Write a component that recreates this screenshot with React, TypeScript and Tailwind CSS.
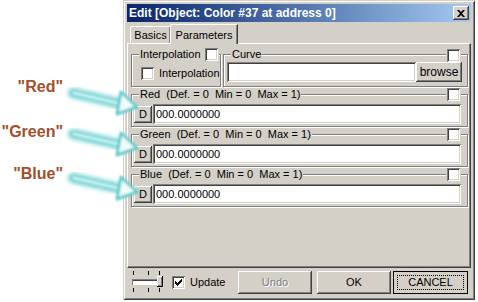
import React from 'react'

// ── Classic 3D bevels ──
const raised =
  'bg-[#d4d0c8] shadow-[inset_-1px_-1px_#404040,inset_1px_1px_#ffffff,inset_-2px_-2px_#808080,inset_2px_2px_#d4d0c8]'
const sunken =
  'bg-white shadow-[inset_1px_1px_#808080,inset_-1px_-1px_#ffffff,inset_2px_2px_#404040,inset_-2px_-2px_#d4d0c8]'
const etched = 'relative border border-[#808080] shadow-[inset_1px_1px_#ffffff,1px_1px_#ffffff]'

function CheckBox({ checked = false }: { checked?: boolean }) {
  return (
    <span className={`flex h-[13px] w-[13px] shrink-0 items-center justify-center ${sunken}`}>
      {checked && (
        <svg width="7" height="7" viewBox="0 0 7 7">
          <path d="M0 2h1v1h1v1h1V3h1V2h1V1h1V0h1v3H6v1H5v1H4v1H3v1H2V6H1V5H0z" fill="#000" />
        </svg>
      )}
    </span>
  )
}

function ParamGroup({ name }: { name: string }) {
  return (
    <div className={`${etched} mt-[7px] h-[33px]`}>
      <span className="absolute -top-[7px] left-[7px] whitespace-pre bg-[#d4d0c8] px-[1px] leading-[13px]">
        {`${name}  (Def. = 0  Min = 0  Max = 1)`}
      </span>
      <span className="absolute -top-[7px] right-[6px] bg-[#d4d0c8] px-[1px]">
        <CheckBox />
      </span>
      <div className="mt-[9px] flex items-center gap-[1px] pl-[2px] pr-[6px]">
        <button className={`flex h-[17px] w-[18px] items-center justify-center ${raised}`}>D</button>
        <div className={`flex h-[20px] flex-1 items-center pl-[3px] ${sunken}`}>000.0000000</div>
      </div>
    </div>
  )
}

function Arrow({ dy }: { dy: number }) {
  return (
    <g transform={`translate(0 ${dy})`}>
      <line x1="73" y1="93" x2="120" y2="103.5" stroke="#74d4d4" strokeWidth="10" strokeLinecap="round" filter="url(#glow)" />
      <line x1="74" y1="93" x2="120" y2="103.5" stroke="#cdf2f2" strokeWidth="3" strokeLinecap="round" filter="url(#soft)" />
      <polygon points="121,92 117,114 137,107" fill="#f2fbfb" stroke="#62cccc" strokeWidth="3" strokeLinejoin="round" filter="url(#soft)" />
    </g>
  )
}

export default function App() {
  return (
    <div className="relative h-[302px] w-[478px] overflow-hidden bg-white font-['Liberation_Sans',Arial,sans-serif] text-[11px] text-black">
      {/* ── Annotations ── */}
      {[
        { t: '"Red"', top: 'top-[79px]' },
        { t: '"Green"', top: 'top-[124px]' },
        { t: '"Blue"', top: 'top-[166px]' },
      ].map((l) => (
        <span
          key={l.t}
          className={`absolute right-[415px] ${l.top} text-[16px] leading-[16px] font-bold text-[#a44e2c]`}
        >
          {l.t}
        </span>
      ))}

      {/* ── Dialog window ── */}
      <div className="ml-[123px] flex h-[300px] w-[352px] flex-col bg-[#d4d0c8] p-[4px] shadow-[inset_1px_1px_#d4d0c8,inset_-1px_-1px_#404040,inset_2px_2px_#ffffff,inset_-2px_-2px_#808080]">
        {/* Title bar */}
        <div className="flex h-[18px] shrink-0 items-center bg-gradient-to-r from-[#0a246a] to-[#a6caf0] pl-[2px] pr-[2px]">
          <span className="flex-1 text-[12px] font-bold text-white">Edit [Object: Color #37 at address 0]</span>
          <button className={`flex h-[14px] w-[16px] items-center justify-center ${raised}`}>
            <svg width="8" height="7" viewBox="0 0 8 7">
              <path d="M0 0h2l2 2 2-2h2L5 3.5 8 7H6L4 5 2 7H0l3-3.5z" fill="#000" />
            </svg>
          </button>
        </div>

        {/* Tabs */}
        <div className="flex h-[21px] shrink-0 items-end pl-[3px]">
          <div className="flex h-[17px] w-[40px] items-center justify-center border-t border-l border-t-white border-l-white shadow-[inset_-1px_0_#808080] rounded-tl-[2px]">
            Basics
          </div>
          <div className="relative z-10 -mb-[1px] flex h-[20px] w-[68px] items-start justify-center border-t border-l border-r border-t-white border-l-white border-r-[#404040] bg-[#d4d0c8] pt-[2px] shadow-[inset_-1px_0_#808080] rounded-tl-[2px]">
            Parameters
          </div>
        </div>

        {/* Panel */}
        <div className="flex h-[225px] shrink-0 flex-col border border-t-white border-l-white border-r-[#404040] border-b-[#404040] pl-[3px] pr-[2px] shadow-[inset_-1px_-1px_#808080]">
          <div className="mt-[10px] flex gap-[2px]">
            {/* Interpolation */}
            <div className={`${etched} h-[33px] w-[90px]`}>
              <span className="absolute -top-[7px] left-[7px] flex items-center gap-[4px] bg-[#d4d0c8] px-[1px] leading-[13px]">
                Interpolation
                <CheckBox />
              </span>
              <div className="mt-[10px] ml-[9px] flex items-center gap-[5px]">
                <CheckBox />
                <span>Interpolation</span>
              </div>
            </div>
            {/* Curve */}
            <div className={`${etched} h-[33px] flex-1`}>
              <span className="absolute -top-[7px] left-[7px] bg-[#d4d0c8] px-[1px] leading-[13px]">Curve</span>
              <span className="absolute -top-[6px] right-[6px] bg-[#d4d0c8] px-[1px]">
                <CheckBox />
              </span>
              <div className="mt-[7px] flex pl-[3px] pr-[5px]">
                <div className={`h-[20px] flex-1 ${sunken}`} />
                <button className={`h-[20px] w-[46px] pb-[1px] text-[12px] ${raised}`}>browse</button>
              </div>
            </div>
          </div>

          <ParamGroup name="Red" />
          <ParamGroup name="Green" />
          <ParamGroup name="Blue" />
        </div>

        {/* Bottom bar */}
        <div className="flex flex-1 items-center pl-[5px] pr-[3px]">
          <svg width="31" height="22" viewBox="0 0 31 22" className="shrink-0">
            <g stroke="#000" strokeWidth="1">
              <path d="M1.5 0v4M16.5 0v4M27.5 0v4M1.5 17v4M16.5 17v4M27.5 17v4" />
            </g>
            <rect x="0" y="8" width="26" height="6" fill="#fff" />
            <path d="M0 8.5h26M0.5 8v6" stroke="#808080" />
            <path d="M1 9.5h25" stroke="#404040" />
            <rect x="25" y="5" width="5" height="11" fill="#d4d0c8" />
            <path d="M25.5 16V5.5H30" stroke="#fff" fill="none" />
            <path d="M25 15.5h5.5V5" stroke="#000" fill="none" />
            <path d="M26 14.5h3.5V6" stroke="#808080" fill="none" />
          </svg>
          <div className="ml-[9px] flex items-center gap-[5px]">
            <CheckBox checked />
            <span>Update</span>
          </div>
          <div className="ml-auto flex items-center">
            <button className={`h-[23px] w-[74px] text-[#808080] [text-shadow:1px_1px_#ffffff] ${raised}`}>Undo</button>
            <button className={`ml-[5px] h-[23px] w-[74px] ${raised}`}>OK</button>
            <button className="ml-[2px] h-[23px] w-[75px] border border-black p-[3px]">
              <span className="flex h-full w-full items-center justify-center border border-dotted border-black">CANCEL</span>
            </button>
          </div>
        </div>
      </div>

      {/* ── Glow arrows ── */}
      <svg className="pointer-events-none absolute left-0 top-0" width="160" height="220" viewBox="0 0 160 220">
        <defs>
          <filter id="glow" x="-20%" y="-50%" width="140%" height="200%">
            <feGaussianBlur stdDeviation="2.2" />
          </filter>
          <filter id="soft" x="-20%" y="-50%" width="140%" height="200%">
            <feGaussianBlur stdDeviation="0.8" />
          </filter>
        </defs>
        <Arrow dy={0} />
        <Arrow dy={41} />
        <Arrow dy={85} />
      </svg>
    </div>
  )
}
